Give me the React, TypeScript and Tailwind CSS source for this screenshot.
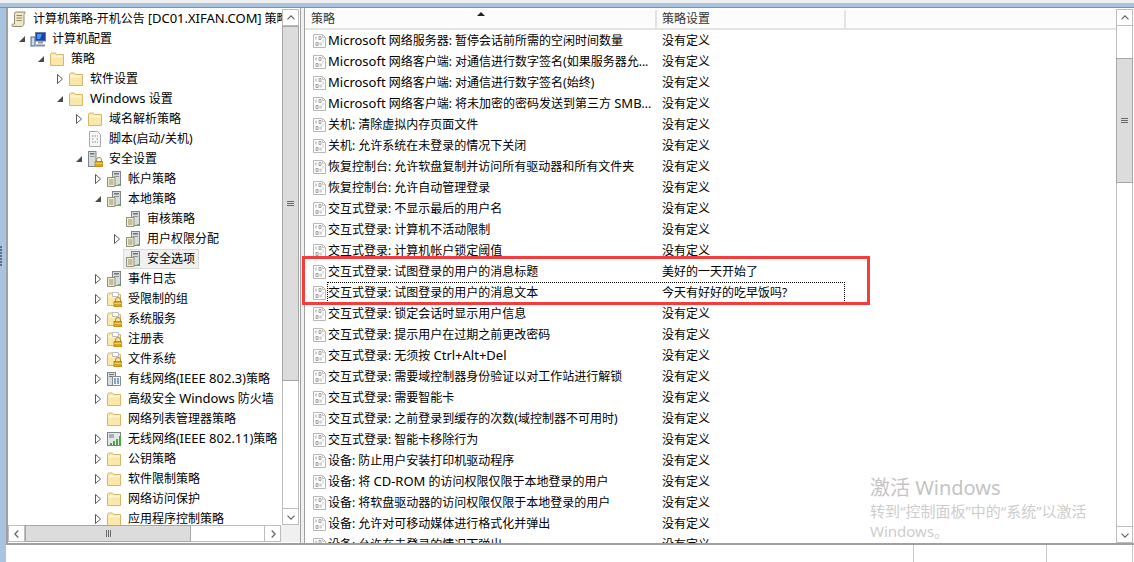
import React from 'react';

type IconName = 'script' | 'computer' | 'folder' | 'folderLock' | 'scriptDoc' | 'secure' | 'server' | 'network' | 'wireless';

type TreeItem = { label: string; level: number; icon: IconName; arrow?: 'open' | 'closed'; selected?: boolean };

const treeItems: TreeItem[] = [
  { label: '计算机策略-开机公告 [DC01.XIFAN.COM] 策略', level: 0, icon: 'script' },
  { label: '计算机配置', level: 1, icon: 'computer', arrow: 'open' },
  { label: '策略', level: 2, icon: 'folder', arrow: 'open' },
  { label: '软件设置', level: 3, icon: 'folder', arrow: 'closed' },
  { label: 'Windows 设置', level: 3, icon: 'folder', arrow: 'open' },
  { label: '域名解析策略', level: 4, icon: 'folder', arrow: 'closed' },
  { label: '脚本(启动/关机)', level: 4, icon: 'scriptDoc' },
  { label: '安全设置', level: 4, icon: 'secure', arrow: 'open' },
  { label: '帐户策略', level: 5, icon: 'server', arrow: 'closed' },
  { label: '本地策略', level: 5, icon: 'server', arrow: 'open' },
  { label: '审核策略', level: 6, icon: 'server' },
  { label: '用户权限分配', level: 6, icon: 'server', arrow: 'closed' },
  { label: '安全选项', level: 6, icon: 'server', selected: true },
  { label: '事件日志', level: 5, icon: 'server', arrow: 'closed' },
  { label: '受限制的组', level: 5, icon: 'folderLock', arrow: 'closed' },
  { label: '系统服务', level: 5, icon: 'folderLock', arrow: 'closed' },
  { label: '注册表', level: 5, icon: 'folderLock', arrow: 'closed' },
  { label: '文件系统', level: 5, icon: 'folderLock', arrow: 'closed' },
  { label: '有线网络(IEEE 802.3)策略', level: 5, icon: 'network', arrow: 'closed' },
  { label: '高级安全 Windows 防火墙', level: 5, icon: 'folder', arrow: 'closed' },
  { label: '网络列表管理器策略', level: 5, icon: 'folder' },
  { label: '无线网络(IEEE 802.11)策略', level: 5, icon: 'wireless', arrow: 'closed' },
  { label: '公钥策略', level: 5, icon: 'folder', arrow: 'closed' },
  { label: '软件限制策略', level: 5, icon: 'folder', arrow: 'closed' },
  { label: '网络访问保护', level: 5, icon: 'folder', arrow: 'closed' },
  { label: '应用程序控制策略', level: 5, icon: 'folder', arrow: 'closed' },
];

const policies: { name: string; value?: string; focus?: boolean }[] = [
  { name: 'Microsoft 网络服务器: 暂停会话前所需的空闲时间数量' },
  { name: 'Microsoft 网络客户端: 对通信进行数字签名(如果服务器允...' },
  { name: 'Microsoft 网络客户端: 对通信进行数字签名(始终)' },
  { name: 'Microsoft 网络客户端: 将未加密的密码发送到第三方 SMB...' },
  { name: '关机: 清除虚拟内存页面文件' },
  { name: '关机: 允许系统在未登录的情况下关闭' },
  { name: '恢复控制台: 允许软盘复制并访问所有驱动器和所有文件夹' },
  { name: '恢复控制台: 允许自动管理登录' },
  { name: '交互式登录: 不显示最后的用户名' },
  { name: '交互式登录: 计算机不活动限制' },
  { name: '交互式登录: 计算机帐户锁定阈值' },
  { name: '交互式登录: 试图登录的用户的消息标题', value: '美好的一天开始了' },
  { name: '交互式登录: 试图登录的用户的消息文本', value: '今天有好好的吃早饭吗?', focus: true },
  { name: '交互式登录: 锁定会话时显示用户信息' },
  { name: '交互式登录: 提示用户在过期之前更改密码' },
  { name: '交互式登录: 无须按 Ctrl+Alt+Del' },
  { name: '交互式登录: 需要域控制器身份验证以对工作站进行解锁' },
  { name: '交互式登录: 需要智能卡' },
  { name: '交互式登录: 之前登录到缓存的次数(域控制器不可用时)' },
  { name: '交互式登录: 智能卡移除行为' },
  { name: '设备: 防止用户安装打印机驱动程序' },
  { name: '设备: 将 CD-ROM 的访问权限仅限于本地登录的用户' },
  { name: '设备: 将软盘驱动器的访问权限仅限于本地登录的用户' },
  { name: '设备: 允许对可移动媒体进行格式化并弹出' },
  { name: '设备: 允许在未登录的情况下弹出' },
];

// the Latin runs in the reference are wider than Noto Sans at 12px
const MixedText = ({ text }: { text: string }) => {
  const parts = text.split(/([A-Za-z0-9][A-Za-z0-9.+\- ]*[A-Za-z0-9])/);
  return (
    <>
      {parts.map((part, i) =>
        i % 2 === 1 ? (
          <span key={i} className="text-[13px]">
            {part}
          </span>
        ) : (
          <React.Fragment key={i}>{part}</React.Fragment>
        ),
      )}
    </>
  );
};

const Lock = () => (
  <g>
    <path d="M9.500 11V9a2.500 2.500 0 0 1 5 0v2" fill="none" stroke="#a08a4a" strokeWidth="1" />
    <rect x="8" y="10.500" width="8" height="5.500" fill="#d9a520" stroke="#a87c10" strokeWidth="0.7" />
    <path d="M8.500 12.500h7" stroke="#f0cf60" strokeWidth="1" />
  </g>
);

const Folder = () => (
  <g>
    <path d="M1.500 3.500l1-1.500h4l1 1.500h7v11h-13z" fill="#fbe8a9" stroke="#d6b66a" strokeWidth="1" />
    <path d="M2.500 4.500h11v2h-11z" fill="#fff5d2" />
  </g>
);

const ServerDoc = () => (
  <g>
    <rect x="6.500" y="0.500" width="8" height="14" fill="#d8dcdf" stroke="#7d8589" />
    <rect x="8" y="2" width="5" height="1.500" fill="#6e767a" />
    <rect x="8" y="5" width="5" height="1" fill="#8e969a" />
    <path d="M1.500 6.500h7.500v9h-7.500z" fill="#f5edc4" stroke="#8f8f7a" />
    <path d="M3 9h4.500M3 11h4.500M3 13h4.500" stroke="#8f8f7a" strokeWidth="1" />
    <rect x="12" y="13" width="2" height="2" fill="#55c04a" />
  </g>
);

const NodeIcon = ({ name }: { name: IconName }) => {
  return (
    <svg width="16" height="16" viewBox="0 0 16 16" className="shrink-0">
      {name === 'script' && (
        <g>
          <path d="M4.500 1h10c-1 1-1.500 2-1.500 3.500v7.500c0 2-1 3.500-2.500 3.500H2C0.500 15.500 0.500 13 2 13h1.500V3.500C3.500 2.500 3.800 1.500 4.500 1z" fill="#efe6c4" stroke="#8f8a6c" />
          <path d="M5.500 4.500h5.500M5.500 7h5.500M5.500 9.500h5" stroke="#8f8a6c" strokeWidth="1" />
        </g>
      )}
      {name === 'computer' && (
        <g>
          <rect x="5.500" y="1.500" width="10" height="8.500" fill="#1c3fae" stroke="#6d7f95" />
          <path d="M7 3h5l-2 5H7z" fill="#3a9bf0" />
          <rect x="8" y="10.500" width="5" height="2" fill="#8b98a5" />
          <rect x="1" y="6" width="4" height="9" fill="#cfd8e0" stroke="#3f6d95" />
          <path d="M6 14.500h9" stroke="#7d8fa3" strokeWidth="2" />
        </g>
      )}
      {name === 'folder' && <Folder />}
      {name === 'folderLock' && (
        <g>
          <Folder />
          <path d="M6.500 1.500h6v4h-6z" fill="#fff" stroke="#bdbdbd" />
          <Lock />
        </g>
      )}
      {name === 'scriptDoc' && (
        <g>
          <path d="M2.500 0.500h8l3 3v12h-11z" fill="#f7f7f7" stroke="#a8a8a8" />
          <path d="M5 5h6M5 8h1.500M9.500 8h1.500M5 11h6" stroke="#8a8a8a" strokeWidth="1" strokeDasharray="1.500 1" />
        </g>
      )}
      {name === 'secure' && (
        <g>
          <rect x="1.500" y="0.500" width="7.500" height="15" fill="#d8dcdf" stroke="#7d8589" />
          <rect x="3" y="2" width="4.500" height="1.500" fill="#6e767a" />
          <rect x="3" y="5" width="4.500" height="1" fill="#8e969a" />
          <Lock />
        </g>
      )}
      {name === 'server' && <ServerDoc />}
      {name === 'network' && (
        <g>
          <rect x="1.500" y="1.500" width="8" height="13" fill="#d8dcdf" stroke="#7d8589" />
          <path d="M3 3.500h5M3 5.500h5" stroke="#6e767a" />
          <path d="M6.500 5.500h8v9h-8z" fill="#f4f6f8" stroke="#8a8a8a" />
          <path d="M9 7v6M12 7v6" stroke="#4a8fc5" strokeWidth="1.500" />
        </g>
      )}
      {name === 'wireless' && (
        <g>
          <rect x="1.500" y="1.500" width="13" height="13" fill="#e4e6e8" stroke="#7d8589" />
          <path d="M3 4h5M3 6h5" stroke="#6e767a" />
          <path d="M4 14v-2h2v2zM7 14v-4h2v4zM10 14v-6h2v6zM13 14V5h2v9z" fill="#4aa83c" />
        </g>
      )}
    </svg>
  );
};

const PolicyIcon = () => (
  <svg width="14" height="16" viewBox="0 0 14 16" className="shrink-0">
    <path d="M0.500 1.500h9l3 3v10h-12z" fill="#fff" stroke="#b8b8b8" />
    <path d="M9.500 1.500v3h3" fill="none" stroke="#c8c8c8" />
    <path d="M3 3.500v3M6 3.500h2v3H6zM3 9.500h2v3H3zM8 9.500v3" fill="none" stroke="#a0a0a0" />
    <path d="M6 9.500v3M10 6.500v3" stroke="#c4c4c4" />
  </svg>
);

const Arrow = ({ kind }: { kind?: 'open' | 'closed' }) => {
  if (!kind) return <span className="w-[10px] shrink-0" />;
  return (
    <svg width="10" height="12" viewBox="0 0 10 12" className="shrink-0">
      {kind === 'closed' ? (
        <path d="M2.500 1.500l5 4.500-5 4.500z" fill="#fff" stroke="#5a5a5a" />
      ) : (
        <path d="M8 3v6H2z" fill="#4a4a4a" />
      )}
    </svg>
  );
};

const Chevron = ({ dir }: { dir: 'up' | 'down' | 'left' | 'right' }) => {
  const paths = {
    up: 'M4 9.500l4-4 4 4',
    down: 'M4 6.500l4 4 4-4',
    left: 'M9.500 4l-4 4 4 4',
    right: 'M6.500 4l4 4-4 4',
  };
  return (
    <svg width="14" height="14" viewBox="0 0 16 16">
      <path d={paths[dir]} fill="none" stroke="#606060" strokeWidth="1.300" />
    </svg>
  );
};

const ScrollButton = ({ dir }: { dir: 'up' | 'down' | 'left' | 'right' }) => (
  <div className="w-[17px] h-[17px] shrink-0 flex items-center justify-center border border-[#bdbdbd] bg-white">
    <Chevron dir={dir} />
  </div>
);

const VThumb = ({ className }: { className: string }) => (
  <div className={`${className} bg-[#dcdcdc] border border-[#a6a6a6] flex flex-col items-center justify-center gap-px`}>
    <span className="w-[7px] h-px bg-[#6a6a6a]" />
    <span className="w-[7px] h-px bg-[#6a6a6a]" />
    <span className="w-[7px] h-px bg-[#6a6a6a]" />
  </div>
);

const TreeRow = ({ item }: { item: TreeItem }) => {
  const label = <MixedText text={item.label} />;
  return (
    <div
      className="h-5 flex items-center whitespace-nowrap text-black"
      style={{ paddingLeft: item.level === 0 ? 3 : 19 * item.level - 10 }}
    >
      {item.level > 0 && (
        <>
          <Arrow kind={item.arrow} />
          <span className="w-[3px] shrink-0" />
        </>
      )}
      {item.selected ? (
        <span className="-ml-[2px] pl-[1px] pr-[3px] h-[20px] -my-px flex items-center bg-[#f0f0f0] border border-[#d9d9d9]">
          <NodeIcon name={item.icon} />
          <span className="ml-[6px]">{label}</span>
        </span>
      ) : (
        <>
          <NodeIcon name={item.icon} />
          <span className="ml-[6px]">{label}</span>
        </>
      )}
    </div>
  );
};

const TreePane = () => (
  <div className="w-[294px] flex flex-col border-l-2 border-[#a0a0a0] bg-white">
    <div className="flex-1 flex min-h-0 pt-[1px]">
      <div className="flex-1 overflow-hidden min-w-0">
        {treeItems.map((item) => (
          <TreeRow key={item.label} item={item} />
        ))}
      </div>
      <div className="w-[17px] shrink-0 flex flex-col mr-[1px]">
        <ScrollButton dir="up" />
        <VThumb className="h-[355px] shrink-0" />
        <div className="flex-1 bg-white border-x border-[#bdbdbd]" />
        <ScrollButton dir="down" />
      </div>
    </div>
    <div className="h-[17px] shrink-0 flex mb-[1px]">
      <ScrollButton dir="left" />
      <div className="w-[166px] bg-[#dcdcdc] border border-[#a6a6a6] flex items-center justify-center gap-px">
        <span className="w-px h-[7px] bg-[#6a6a6a]" />
        <span className="w-px h-[7px] bg-[#6a6a6a]" />
        <span className="w-px h-[7px] bg-[#6a6a6a]" />
      </div>
      <div className="w-[73px] bg-white border-y border-[#bdbdbd]" />
      <ScrollButton dir="right" />
      <div className="flex-1 bg-[#f0f0f0]" />
    </div>
  </div>
);

const ListPane = () => (
  <div className="flex-1 min-w-0 flex border-l border-[#a0a0a0] bg-white">
    <div className="flex-1 min-w-0 flex flex-col overflow-hidden">
      <div className="h-[22px] shrink-0 flex pt-[2px] bg-white text-[#333] relative">
        <div className="w-[352px] pl-[6px] flex items-center bg-[#fcfcfc] border-b-2 border-r-2 border-[#e3e3e3]">策略</div>
        <div className="w-[189px] pl-[5px] flex items-center bg-[#fcfcfc] border-b-2 border-r-2 border-[#e3e3e3]">策略设置</div>
        <div className="flex-1 bg-[#fcfcfc] border-b-2 border-[#e3e3e3]" />
        <svg width="8" height="4" viewBox="0 0 8 4" className="absolute left-[172px] top-[4px]">
          <path d="M4 0l4 4H0z" fill="#222" />
        </svg>
      </div>
      {policies.map((row) => (
        <div key={row.name} className="h-[21px] shrink-0 flex items-center text-black whitespace-nowrap">
          <span className="w-[8px] shrink-0" />
          <PolicyIcon />
          <div
            className={
              row.focus
                ? 'w-[518px] h-[21px] flex items-center outline-1 outline-dotted -outline-offset-1 outline-black'
                : 'w-[518px] flex items-center'
            }
          >
            <span className="w-[335px] pl-[1px] shrink-0">
              <MixedText text={row.name} />
            </span>
            <span>{row.value ?? '没有定义'}</span>
          </div>
        </div>
      ))}
    </div>
    <div className="w-[17px] shrink-0 flex flex-col mr-[1px] pt-[1px]">
      <ScrollButton dir="up" />
      <div className="h-[32px] shrink-0 bg-white border-x border-[#bdbdbd]" />
      <VThumb className="h-[125px] shrink-0" />
      <div className="flex-1 bg-white border-x border-[#bdbdbd]" />
      <ScrollButton dir="down" />
    </div>
  </div>
);

export default function App() {
  return (
    <div className="relative w-[1134px] h-[562px] overflow-hidden bg-white flex flex-col text-[12px] font-['Noto_Sans','Noto_Sans_CJK_SC',sans-serif]">
      <div className="h-[3px] shrink-0 bg-[#f0f0f0]" />
      <div className="h-[5px] shrink-0 bg-[#a9c4e0] border-b border-[#7f93a8]" />
      <div className="flex-1 flex min-h-0">
        <div className="w-[6px] shrink-0 bg-[#a9c4e0] flex flex-col gap-px pt-[238px]">
          {[0, 1, 2, 3, 4, 5, 6].map((i) => (
            <span key={i} className="w-[2px] h-[2px] bg-[#5f6f80]" />
          ))}
        </div>
        <div className="flex-1 min-w-0 flex flex-col">
          <div className="h-[537px] shrink-0 flex border-b-2 border-[#a0a0a0]">
            <TreePane />
            <div className="w-[4px] shrink-0 bg-[#f0f0f0] border-l border-[#a0a0a0]" />
            <ListPane />
          </div>
          <div className="flex-1 flex bg-white">
            <div className="w-[908px] border-r border-[#c8c8c8]" />
            <div className="w-[133px] border-r border-[#c8c8c8]" />
            <div className="w-[86px] border-r border-[#c8c8c8]" />
          </div>
        </div>
      </div>

      {/* red annotation box */}
      <div className="absolute left-[302px] top-[256px] w-[568px] h-[49px] border-[3px] border-[#f53c3c] pointer-events-none" />

      {/* activation watermark */}
      <div className="absolute left-[870px] top-[474px] text-[#c4c4c4] pointer-events-none">
        <div className="text-[20px] leading-[27px]">激活 Windows</div>
        <div className="text-[15px] leading-[20px] text-[#cdcdcd]">转到“控制面板”中的“系统”以激活</div>
        <div className="text-[15px] leading-[20px] text-[#cdcdcd]">Windows。</div>
      </div>
    </div>
  );
}
